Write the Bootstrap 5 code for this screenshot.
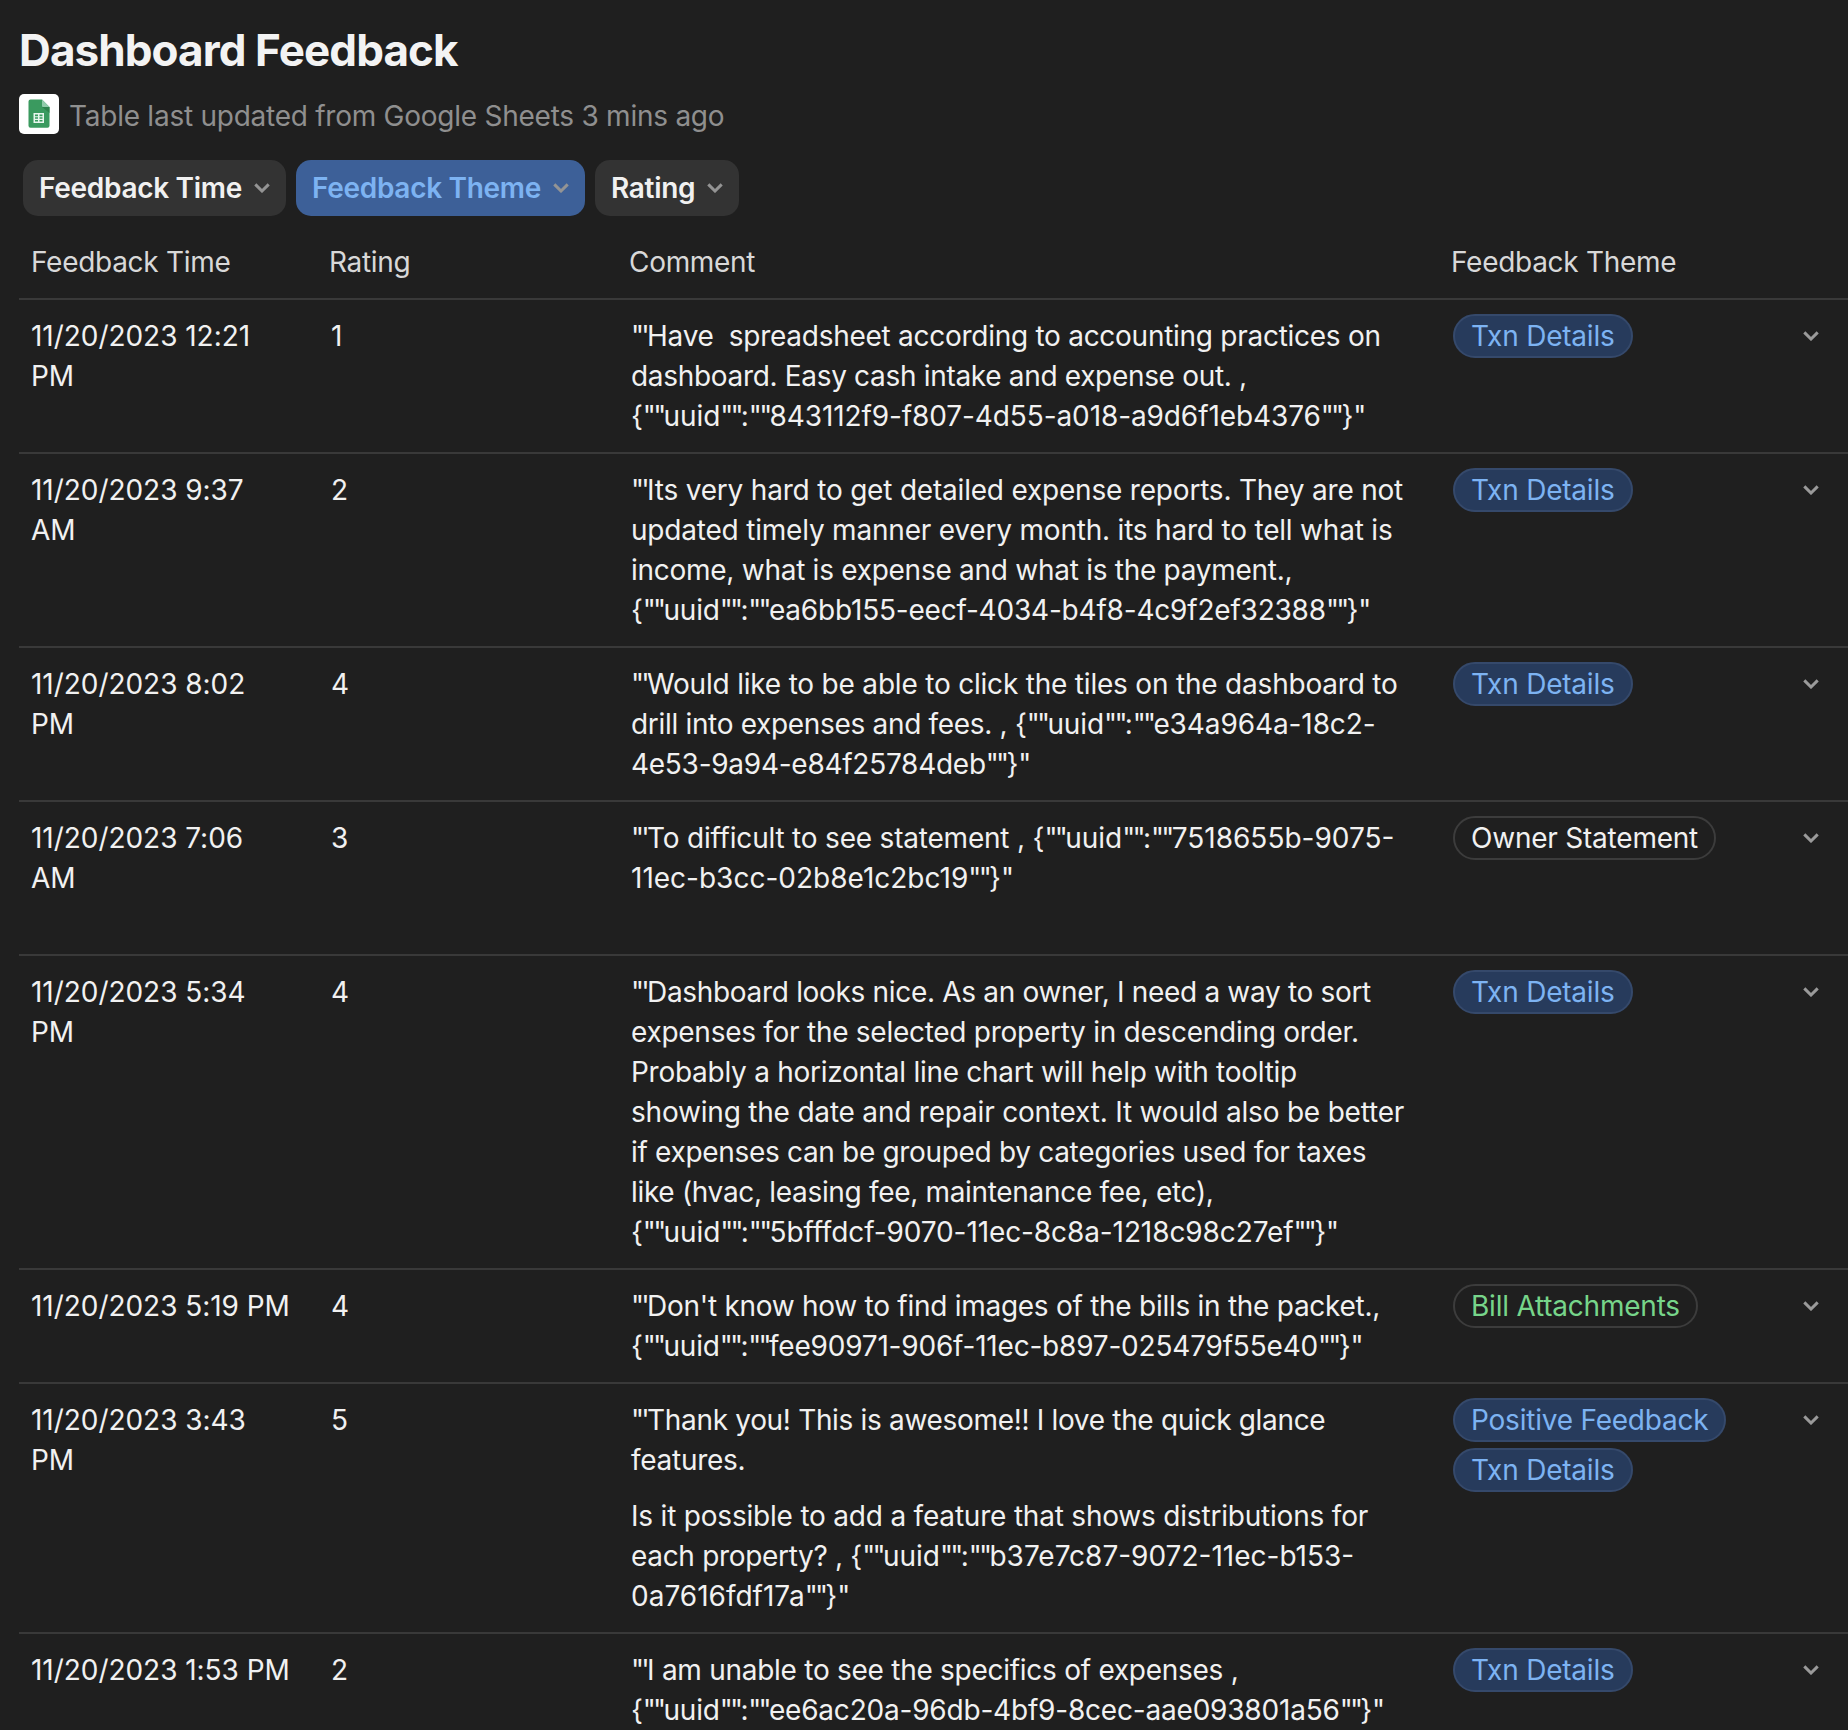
<!DOCTYPE html>
<html lang="en" data-bs-theme="dark">
<head>
<meta charset="utf-8">
<meta name="viewport" content="width=device-width, initial-scale=1">
<title>Dashboard Feedback</title>
<link href="https://cdn.jsdelivr.net/npm/bootstrap@5.3.0/dist/css/bootstrap.min.css" rel="stylesheet">
<style>
  html, body { height: 1730px; overflow: hidden; }
  body { background: #1f1f1f; color: #f1f1f1; font: 400 28px/40px Inter, sans-serif; }
  .feedback-page { padding: 22px 0 0 19px; }
  .page-title { font-size: 44px; line-height: 56px; font-weight: 700; letter-spacing: -.9px; color: #f3f3f3; margin: 0 0 16px; }
  .sync-line { height: 40px; gap: 10px; color: #8f8f8f; margin-bottom: 26px; }
  .sync-text { letter-spacing: -.25px; padding-top: 4px; }
  .sheets-tile { width: 40px; height: 40px; border-radius: 5px; background: #fff; }
  .filter-bar { gap: 10px; padding-left: 4px; margin-bottom: 16px; }
  .btn.filter-pill { height: 56px; padding: 0 16px; gap: 12px; border: 0; border-radius: 15px; background: #333; color: #f1f1f1; font-size: 28px; line-height: 56px; font-weight: 600; letter-spacing: -.3px; }
  .btn.filter-pill.active { background: #3d6098; color: #7db3f2; }
  .feedback-table { --bs-table-bg: transparent; table-layout: fixed; width: 1829px; margin: 0; color: #f1f1f1; }
  .feedback-table > :not(caption) > * > * { padding: 16px 0 16px 13px; border: 0; border-bottom: 2px solid #393939; white-space: pre; font-weight: 400; color: #f1f1f1; vertical-align: top; }
  .feedback-table > tbody > tr > td:first-child { padding-left: 12px; letter-spacing: -.04px; }
  .feedback-table > thead > tr > th { padding: 10px 0 15px 11px; height: 67px; color: #d8d8d8; letter-spacing: -.3px; }
  .feedback-table > thead > tr > th:first-child { padding-left: 12px; }
  .feedback-table > thead > tr > th:nth-child(4) { padding-left: 10px; }
  .feedback-table td p { margin: 0 0 16px; }
  .feedback-table td p:last-child { margin: 0; }
  .feedback-table > tbody > tr > td.theme-cell { padding-top: 14px; padding-bottom: 0; padding-left: 12px; }
  .feedback-table > tbody > tr > td.open-cell { padding: 31px 0 0; }
  .tall-row { height: 154px; }
  .theme-tags { gap: 6px; }
  .theme-tag { height: 44px; line-height: 40px; padding: 0 16px; border: 2px solid #3c3c3c; border-radius: 22px; letter-spacing: -.22px; }
  .theme-blue { background: #273b5c; border-color: #35496b; color: #7db3f2; }
  .theme-green { color: #77d58a; }
  /* tracking steps for comment lines */
  .trk-1 { letter-spacing: -.1px; }
  .trk-2 { letter-spacing: -.2px; }
  .trk-3 { letter-spacing: -.27px; }
  .trk-4 { letter-spacing: -.32px; }
  .quo { letter-spacing: -2.7px; }
  svg { display: block; }
</style>
</head>
<body>
<svg width="0" height="0" class="position-absolute">
  <symbol id="chev" viewBox="0 0 16 10"><path d="M1.300 1.400 8 8 14.700 1.400" fill="none" stroke="currentColor" stroke-width="3"/></symbol>
</svg>
<main class="feedback-page">
  <h1 class="page-title">Dashboard Feedback</h1>
  <div class="sync-line d-flex align-items-center">
    <span class="sheets-tile d-flex align-items-center justify-content-center flex-shrink-0">
      <svg width="22" height="30" viewBox="0 0 22 30"><path d="M2 .5h11.500L21 8v18.700a2 2 0 0 1-2 2H2a2 2 0 0 1-2-2V2.500a2 2 0 0 1 2-2z" transform="translate(.5 0)" fill="#3a9a5f"/><path d="M14 8 21.500 14V8z" fill="#2d834d"/><path d="M14 .5 21.500 8H15a1 1 0 0 1-1-1z" fill="#8fcbaa"/><path d="M5.500 14h10.500v10H5.500z" fill="#e9f6ee"/><path d="M7 15.500h3v1.700H7zM11.500 15.500h3v1.700h-3zM7 18.300h3v1.500H7zM11.500 18.300h3v1.500h-3zM7 20.900h3v1.700H7zM11.500 20.900h3v1.700h-3z" fill="#3a9a5f"/></svg>
    </span>
    <span class="sync-text">Table last updated from Google Sheets 3 mins ago</span>
  </div>
  <div class="filter-bar d-flex">
    <button class="btn filter-pill d-flex align-items-center">Feedback Time <svg width="16" height="10" color="#949494"><use href="#chev"/></svg></button>
    <button class="btn filter-pill active d-flex align-items-center">Feedback Theme <svg width="16" height="10" color="#949494"><use href="#chev"/></svg></button>
    <button class="btn filter-pill d-flex align-items-center">Rating <svg width="16" height="10" color="#949494"><use href="#chev"/></svg></button>
  </div>
  <table class="table feedback-table">
    <colgroup><col style="width:299px"><col style="width:300px"><col style="width:823px"><col style="width:344px"><col></colgroup>
    <thead><tr><th>Feedback Time</th><th>Rating</th><th>Comment</th><th>Feedback Theme</th><th></th></tr></thead>
    <tbody>
      <tr><td>11/20/2023 12:21<br>PM</td><td>1</td><td class="comment-cell"><span class="trk-3">"'Have  spreadsheet according to accounting practices on</span><br><span class="trk-4">dashboard. Easy cash intake and expense out. ,</span><br><span class="trk-1">{""uuid"":""843112f9-f807-4d55-a018-a9d6f1eb4376""}"</span></td><td class="theme-cell"><div class="theme-tags d-flex flex-column align-items-start"><span class="theme-tag theme-blue">Txn Details</span></div></td><td class="open-cell"></td></tr>
      <tr><td>11/20/2023 9:37<br>AM</td><td>2</td><td class="comment-cell"><span class="trk-2">"'Its very hard to get detailed expense reports. They are not</span><br><span class="trk-2">updated timely manner every month. its hard to tell what is</span><br><span class="trk-3">income, what is expense and what is the payment.,</span><br><span class="trk-2">{""uuid"":""ea6bb155-eecf-4034-b4f8-4c9f2ef32388""}"</span></td><td class="theme-cell"><div class="theme-tags d-flex flex-column align-items-start"><span class="theme-tag theme-blue">Txn Details</span></div></td><td class="open-cell"></td></tr>
      <tr><td>11/20/2023 8:02<br>PM</td><td>4</td><td class="comment-cell"><span class="trk-2">"'Would like to be able to click the tiles on the dashboard to</span><br><span class="trk-4">drill into expenses and fees. , </span><span class="trk-1">{""uuid"":""e34a964a-18c2-</span><br><span class="trk-3">4e53-9a94-e84f25784deb""}"</span></td><td class="theme-cell"><div class="theme-tags d-flex flex-column align-items-start"><span class="theme-tag theme-blue">Txn Details</span></div></td><td class="open-cell"></td></tr>
      <tr class="tall-row"><td>11/20/2023 7:06<br>AM</td><td>3</td><td class="comment-cell"><span class="trk-2">"'To difficult to see statement , </span>{""uuid"":""7518655b-9075-<br>11ec-b3cc-02b8e1c2bc19""}"</td><td class="theme-cell"><div class="theme-tags d-flex flex-column align-items-start"><span class="theme-tag">Owner Statement</span></div></td><td class="open-cell"></td></tr>
      <tr><td>11/20/2023 5:34<br>PM</td><td>4</td><td class="comment-cell"><span class="trk-4">"'Dashboard looks nice. As an owner, I need a way to sort</span><br><span class="trk-3">expenses for the selected property in descending order.</span><br><span class="trk-3">Probably a horizontal line chart will help with tooltip</span><br><span class="trk-2">showing the date and repair context. It would also be better</span><br><span class="trk-4">if expenses can be grouped by categories used for taxes</span><br><span class="trk-4">like (hvac, leasing fee, maintenance fee, etc),</span><br><span class="trk-1">{""uuid"":""5bfffdcf-9070-11ec-8c8a-1218c98c27ef""}"</span></td><td class="theme-cell"><div class="theme-tags d-flex flex-column align-items-start"><span class="theme-tag theme-blue">Txn Details</span></div></td><td class="open-cell"></td></tr>
      <tr><td>11/20/2023 5:19 PM</td><td>4</td><td class="comment-cell"><span class="trk-3">"'Don't know how to find images of the bills in the packet.,</span><br><span class="trk-2">{""uuid"":""fee90971-906f-11ec-b897-025479f55e40""}"</span></td><td class="theme-cell"><div class="theme-tags d-flex flex-column align-items-start"><span class="theme-tag theme-green">Bill Attachments</span></div></td><td class="open-cell"></td></tr>
      <tr><td>11/20/2023 3:43<br>PM</td><td>5</td><td class="comment-cell"><p><span class="trk-4">"'Thank you! This is awesome!! I love the quick glance</span><br><span class="trk-3">features.</span></p><p><span class="trk-2">Is it possible to add a feature that shows distributions for</span><br><span class="trk-4">each property? , </span>{""uuid"":""b37e7c87-9072-11ec-b153-<br>0a7616fdf17a""}"</p></td><td class="theme-cell"><div class="theme-tags d-flex flex-column align-items-start"><span class="theme-tag theme-blue">Positive Feedback</span><span class="theme-tag theme-blue">Txn Details</span></div></td><td class="open-cell"></td></tr>
      <tr><td>11/20/2023 1:53 PM</td><td>2</td><td class="comment-cell"><span class="trk-3">"'I am unable to see the specifics of expenses ,</span><br><span class="trk-2">{""uuid"":""ee6ac20a-96db-4bf9-8cec-aae093801a56""}"</span></td><td class="theme-cell"><div class="theme-tags d-flex flex-column align-items-start"><span class="theme-tag theme-blue">Txn Details</span></div></td><td class="open-cell"></td></tr>
    </tbody>
  </table>
</main>
<script src="https://cdn.jsdelivr.net/npm/bootstrap@5.3.0/dist/js/bootstrap.bundle.min.js"></script>
<script>
  // One disclosure chevron at the end of every feedback row
  document.querySelectorAll('.open-cell').forEach(function (cell) {
    cell.innerHTML = '<svg class="ms-auto" style="margin-right:29px" width="16" height="10" color="#9a9a9a"><use href="#chev"/></svg>';
  });
  // Set straight double quotes tighter than the surrounding text
  document.querySelectorAll('.comment-cell').forEach(function (cell) {
    var walker = document.createTreeWalker(cell, NodeFilter.SHOW_TEXT), nodes = [];
    while (walker.nextNode()) nodes.push(walker.currentNode);
    nodes.forEach(function (node) {
      var frag = document.createDocumentFragment();
      node.data.split(/("+'?)/).forEach(function (part) {
        if (!part) return;
        var piece = document.createTextNode(part);
        if (part[0] === '"') {
          var span = document.createElement('span');
          span.className = 'quo';
          span.appendChild(piece);
          piece = span;
        }
        frag.appendChild(piece);
      });
      node.replaceWith(frag);
    });
  });
</script>
</body>
</html>
